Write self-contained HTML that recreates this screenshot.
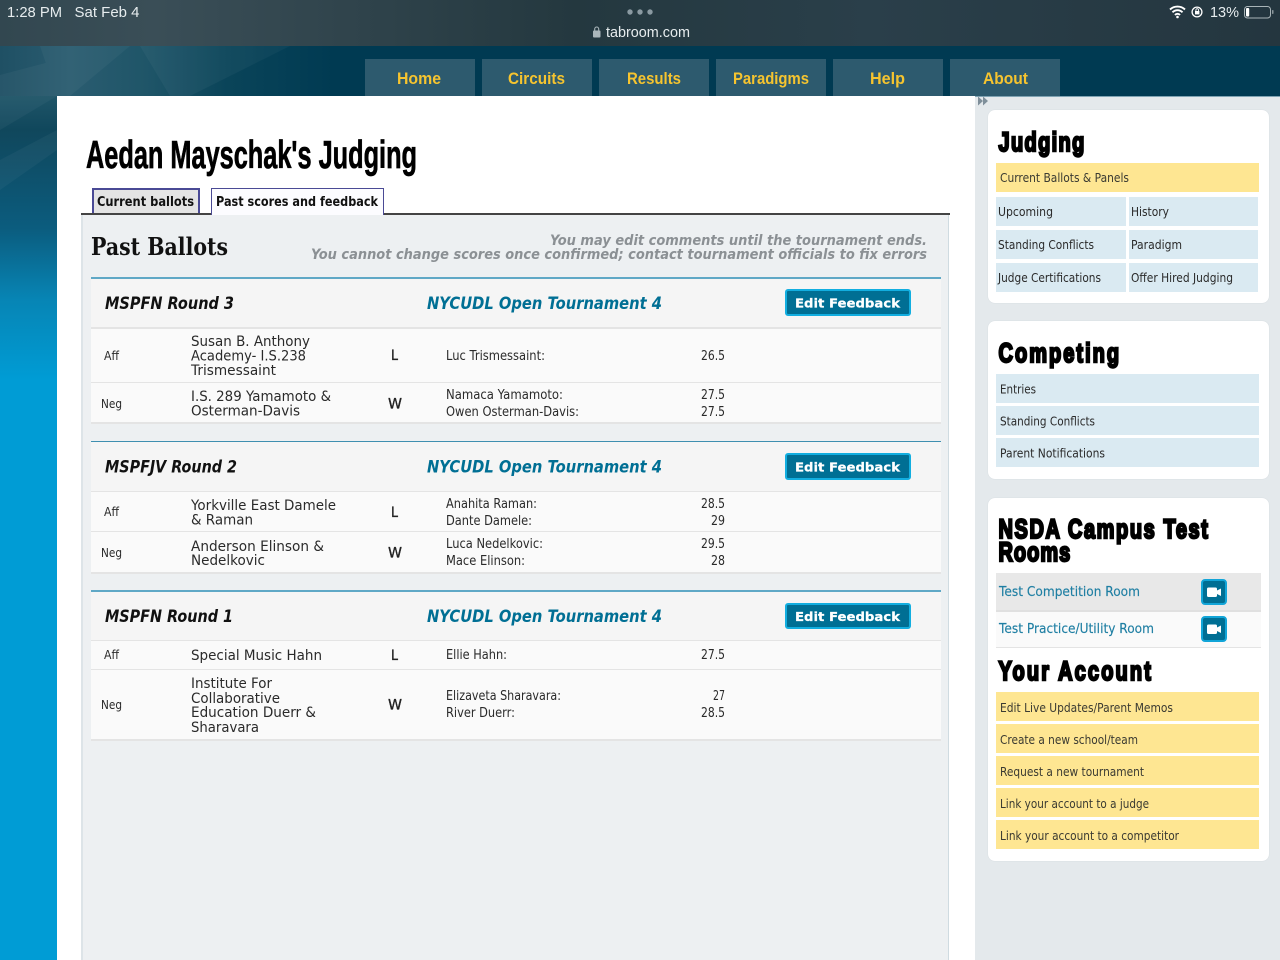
<!DOCTYPE html>
<html lang="en"><head><meta charset="utf-8"><title>Aedan Mayschak's Judging</title>
<style>
html,body{margin:0;padding:0;width:1280px;height:960px;overflow:hidden;background:#e4e9ec}
.b{position:absolute}
svg{position:absolute;left:0;top:0}
text{white-space:pre}
.s{font-family:"DejaVu Sans",sans-serif;font-size:12px;fill:#2a2a2a}
.m{font-family:"DejaVu Sans",sans-serif;font-size:13px;fill:#2a2a2a}
.l{font-family:"DejaVu Sans",sans-serif;font-size:14px;fill:#2a2a2a}
.y{font-family:"DejaVu Sans",sans-serif;font-size:12px;fill:#3a3a32}
.st{font-family:"Liberation Sans",sans-serif;font-size:14.5px;fill:#e6ecee}
.n{font-family:"Liberation Sans",sans-serif;font-size:16.5px;font-weight:700;fill:#f6c42f}
.h{font-family:"Liberation Sans",sans-serif;font-weight:700;fill:#000;stroke:#000;stroke-width:2.4px;font-size:27px}
.i{font-family:"DejaVu Sans",sans-serif;font-size:14px;font-style:italic;font-weight:700;fill:#8b9094}
.c{font-family:"DejaVu Sans",sans-serif;font-size:16.5px;font-style:italic;font-weight:700;fill:#111}
.t{font-family:"DejaVu Sans",sans-serif;font-size:16.5px;font-style:italic;font-weight:700;fill:#006f94}
.e{font-family:"DejaVu Sans",sans-serif;font-size:12.5px;font-weight:700;fill:#fff;stroke:#fff;stroke-width:.25px}
.r{font-family:"DejaVu Sans",sans-serif;font-size:14px;fill:#222;stroke:#222;stroke-width:.35px}
.a{font-family:"DejaVu Sans",sans-serif;font-size:13px;fill:#1f7fa3;stroke:#1f7fa3;stroke-width:.15px}
</style></head><body>
<div class="b" style="left:0;top:0;width:1280px;height:46px;background:linear-gradient(90deg,#324750 0%,#3a4e57 12%,#24383f 45%,#2a3f4a 68%,#24363f 100%)"></div>
<div class="b" style="left:0;top:96px;width:57px;height:864px;background:linear-gradient(180deg,#1f5568 0,#10475c 34px,#0b5c7e 132px,#0785b5 204px,#009cd5 284px,#009cd5 100%)"></div>
<div class="b" style="left:0;top:46px;width:1280px;height:50px;background:linear-gradient(90deg,#1f5064 0,#2a5c70 70px,#1f5568 147px,#0a4459 227px,#003a52 337px,#003a52 100%)"></div>
<div class="b" style="left:365px;top:59px;width:110px;height:37px;background:#2d5a6e"></div>
<div class="b" style="left:482px;top:59px;width:110px;height:37px;background:#2d5a6e"></div>
<div class="b" style="left:599px;top:59px;width:110px;height:37px;background:#2d5a6e"></div>
<div class="b" style="left:716px;top:59px;width:110px;height:37px;background:#2d5a6e"></div>
<div class="b" style="left:833px;top:59px;width:110px;height:37px;background:#2d5a6e"></div>
<div class="b" style="left:950px;top:59px;width:110px;height:37px;background:#2d5a6e"></div>
<div class="b" style="left:57px;top:96px;width:918px;height:864px;background:#fff"></div>
<div class="b" style="left:975px;top:96px;width:305px;height:864px;background:#e4e9ec"></div>
<div class="b" style="left:0;top:96px;width:1280px;height:1px;background:#7fa3b3;clip-path:inset(0 0 0 975px)"></div>

<div class="b" style="left:81px;top:214px;width:868px;height:746px;background:#edf0f2;border-left:2px solid #dde4e8;border-right:1px solid #cfdbe1;box-sizing:border-box"></div>
<div class="b" style="left:92px;top:188px;width:108px;height:26px;background:#e4e4e4;border:2px solid #4a4a95;border-bottom:0;box-sizing:border-box"></div>
<div class="b" style="left:81px;top:213px;width:869px;height:2px;background:#444"></div>
<div class="b" style="left:211px;top:188px;width:173px;height:27px;background:#fcfcff;border:1px solid #4a4a95;border-bottom:0;box-sizing:border-box"></div>

<div class="b" style="left:91px;top:277px;width:850px;height:2px;background:#5fa8c6"></div>
<div class="b" style="left:91px;top:279px;width:850px;height:48px;background:#f5f5f5"></div>
<div class="b" style="left:91px;top:327px;width:850px;height:2px;background:#e4e4e4"></div>
<div class="b" style="left:91px;top:329px;width:850px;height:53px;background:#fafafa"></div>
<div class="b" style="left:91px;top:382px;width:850px;height:1px;background:#e4e4e4"></div>
<div class="b" style="left:91px;top:383px;width:850px;height:39px;background:#fafafa"></div>
<div class="b" style="left:91px;top:422px;width:850px;height:2px;background:#e4e4e4"></div>

<div class="b" style="left:91px;top:441px;width:850px;height:1px;background:#3f8fb0"></div>
<div class="b" style="left:91px;top:442px;width:850px;height:49px;background:#f5f5f5"></div>
<div class="b" style="left:91px;top:491px;width:850px;height:1px;background:#e4e4e4"></div>
<div class="b" style="left:91px;top:492px;width:850px;height:39px;background:#fafafa"></div>
<div class="b" style="left:91px;top:531px;width:850px;height:1px;background:#e4e4e4"></div>
<div class="b" style="left:91px;top:532px;width:850px;height:40px;background:#fafafa"></div>
<div class="b" style="left:91px;top:572px;width:850px;height:2px;background:#e4e4e4"></div>

<div class="b" style="left:91px;top:590px;width:850px;height:2px;background:#5fa8c6"></div>
<div class="b" style="left:91px;top:592px;width:850px;height:48px;background:#f5f5f5"></div>
<div class="b" style="left:91px;top:640px;width:850px;height:1px;background:#e4e4e4"></div>
<div class="b" style="left:91px;top:641px;width:850px;height:28px;background:#fafafa"></div>
<div class="b" style="left:91px;top:669px;width:850px;height:1px;background:#e4e4e4"></div>
<div class="b" style="left:91px;top:670px;width:850px;height:69px;background:#fafafa"></div>
<div class="b" style="left:91px;top:739px;width:850px;height:2px;background:#e4e4e4"></div>

<div class="b" style="left:785px;top:289px;width:126px;height:27px;background:#006f94;border:2px solid #12aee0;border-radius:3px;box-sizing:border-box"></div>
<div class="b" style="left:785px;top:453px;width:126px;height:27px;background:#006f94;border:2px solid #12aee0;border-radius:3px;box-sizing:border-box"></div>
<div class="b" style="left:785px;top:603px;width:126px;height:26px;background:#006f94;border:2px solid #12aee0;border-radius:3px;box-sizing:border-box"></div>

<div class="b" style="left:988px;top:110px;width:281px;height:193px;background:#fff;border-radius:7px;box-shadow:0 0 1px #c5cdd2"></div>
<div class="b" style="left:988px;top:321px;width:281px;height:158px;background:#fff;border-radius:7px;box-shadow:0 0 1px #c5cdd2"></div>
<div class="b" style="left:988px;top:498px;width:281px;height:363px;background:#fff;border-radius:7px;box-shadow:0 0 1px #c5cdd2"></div>

<div class="b" style="left:996px;top:163px;width:263px;height:29px;background:#fee692"></div>
<div class="b" style="left:996px;top:197px;width:130px;height:29px;background:#daeaf2"></div>
<div class="b" style="left:1129px;top:197px;width:129px;height:29px;background:#daeaf2"></div>
<div class="b" style="left:996px;top:230px;width:130px;height:29px;background:#daeaf2"></div>
<div class="b" style="left:1129px;top:230px;width:129px;height:29px;background:#daeaf2"></div>
<div class="b" style="left:996px;top:263px;width:130px;height:29px;background:#daeaf2"></div>
<div class="b" style="left:1129px;top:263px;width:129px;height:29px;background:#daeaf2"></div>

<div class="b" style="left:996px;top:374px;width:263px;height:29px;background:#daeaf2"></div>
<div class="b" style="left:996px;top:406px;width:263px;height:29px;background:#daeaf2"></div>
<div class="b" style="left:996px;top:438px;width:263px;height:29px;background:#daeaf2"></div>

<div class="b" style="left:996px;top:573px;width:265px;height:37px;background:#e8e8e8;border-bottom:2px solid #e0e0e0"></div>
<div class="b" style="left:996px;top:612px;width:265px;height:35px;background:#fafafa;border-bottom:1px solid #e4e4e4"></div>
<div class="b" style="left:1201px;top:579px;width:26px;height:26px;background:#006f94;border:2px solid #12a5d8;border-radius:4px;box-sizing:border-box"></div>
<div class="b" style="left:1201px;top:616px;width:26px;height:26px;background:#006f94;border:2px solid #12a5d8;border-radius:4px;box-sizing:border-box"></div>

<div class="b" style="left:996px;top:692px;width:263px;height:29px;background:#fee692"></div>
<div class="b" style="left:996px;top:724px;width:263px;height:29px;background:#fee692"></div>
<div class="b" style="left:996px;top:756px;width:263px;height:29px;background:#fee692"></div>
<div class="b" style="left:996px;top:788px;width:263px;height:29px;background:#fee692"></div>
<div class="b" style="left:996px;top:820px;width:263px;height:29px;background:#fee692"></div>

<svg width="1280" height="960" viewBox="0 0 1280 960" xmlns="http://www.w3.org/2000/svg">
<g fill="#fff" opacity=".035"><polygon points="40,46 130,46 70,96 57,96"/><polygon points="0,75 57,60 57,96 0,130"/><polygon points="0,160 57,130 57,150 0,190"/><polygon points="140,46 290,46 190,96 170,96"/></g>

<text class="st" x="7" y="17" textLength="55" lengthAdjust="spacingAndGlyphs">1:28 PM</text>
<text class="st" x="74.5" y="17" textLength="65" lengthAdjust="spacingAndGlyphs">Sat Feb 4</text>
<circle cx="630" cy="12" r="2.7" fill="#8a9aa2"/><circle cx="640" cy="12" r="2.7" fill="#8a9aa2"/><circle cx="650" cy="12" r="2.7" fill="#8a9aa2"/>
<rect x="593" y="30.5" width="7.5" height="7" rx="1" fill="#aab6bb"/><path d="M594.7 31V29a2 2 0 0 1 4 0v2" fill="none" stroke="#aab6bb" stroke-width="1.1"/>
<text class="st" x="606" y="37" textLength="84" lengthAdjust="spacingAndGlyphs">tabroom.com</text>
<path d="M1170 9.500a11 11 0 0 1 15 0M1172.500 12.300a7 7 0 0 1 10 0M1175 15a3.300 3.300 0 0 1 5 0" fill="none" stroke="#fff" stroke-width="1.9"/><circle cx="1177.500" cy="17" r="1.300" fill="#fff"/>
<circle cx="1197" cy="12" r="4.900" fill="none" stroke="#fff" stroke-width="1.300"/><rect x="1195" y="11" width="4.400" height="3.400" fill="#fff"/><path d="M1195.900 11v-1a1.300 1.300 0 0 1 2.600 0v1" fill="none" stroke="#fff" stroke-width=".9"/>
<text class="st" x="1210" y="17" textLength="29" lengthAdjust="spacingAndGlyphs">13%</text>
<rect x="1244.500" y="6.500" width="26" height="11.500" rx="3" fill="none" stroke="#a9b4b8"/><rect x="1246" y="8" width="3.200" height="8.500" rx="1" fill="#fff"/><rect x="1272" y="10" width="1.500" height="4" rx=".7" fill="#8a969b"/>

<text class="n" x="397" y="84" textLength="44" lengthAdjust="spacingAndGlyphs">Home</text>
<text class="n" x="508" y="84" textLength="57" lengthAdjust="spacingAndGlyphs">Circuits</text>
<text class="n" x="627" y="84" textLength="54" lengthAdjust="spacingAndGlyphs">Results</text>
<text class="n" x="733" y="84" textLength="76" lengthAdjust="spacingAndGlyphs">Paradigms</text>
<text class="n" x="870" y="84" textLength="35" lengthAdjust="spacingAndGlyphs">Help</text>
<text class="n" x="983" y="84" textLength="45" lengthAdjust="spacingAndGlyphs">About</text>

<path d="M978 96.500l5 4.500-5 4.500zM983 96.500l5 4.500-5 4.500z" fill="#7f8f9a"/>

<text x="86" y="168" textLength="331" lengthAdjust="spacingAndGlyphs" style="font-family:'Liberation Sans',sans-serif;font-weight:700;font-size:39px;fill:#000;stroke:#000;stroke-width:.7px">Aedan Mayschak's Judging</text>
<text x="97" y="206" textLength="97" lengthAdjust="spacingAndGlyphs" style="font-family:'DejaVu Sans',sans-serif;font-weight:700;font-size:13px;fill:#111">Current ballots</text>
<text x="216" y="206" textLength="162" lengthAdjust="spacingAndGlyphs" style="font-family:'DejaVu Sans',sans-serif;font-weight:700;font-size:13px;fill:#111">Past scores and feedback</text>

<text x="91" y="255" textLength="137" lengthAdjust="spacingAndGlyphs" style="font-family:'DejaVu Serif',serif;font-weight:700;font-size:24px;fill:#111">Past Ballots</text>
<text class="i" x="550" y="245" textLength="377" lengthAdjust="spacingAndGlyphs">You may edit comments until the tournament ends.</text>
<text class="i" x="311" y="259" textLength="616" lengthAdjust="spacingAndGlyphs">You cannot change scores once confirmed; contact tournament officials to fix errors</text>

<text class="c" x="105" y="309" textLength="129" lengthAdjust="spacingAndGlyphs">MSPFN Round 3</text>
<text class="t" x="427" y="309" textLength="235" lengthAdjust="spacingAndGlyphs">NYCUDL Open Tournament 4</text>
<text class="e" x="795" y="307.500" textLength="105" lengthAdjust="spacingAndGlyphs">Edit Feedback</text>
<text class="s" x="104" y="360" textLength="15" lengthAdjust="spacingAndGlyphs">Aff</text>
<text class="l" x="191" y="346" textLength="119" lengthAdjust="spacingAndGlyphs">Susan B. Anthony</text>
<text class="l" x="191" y="360.500" textLength="115" lengthAdjust="spacingAndGlyphs">Academy- I.S.238</text>
<text class="l" x="191" y="375" textLength="85" lengthAdjust="spacingAndGlyphs">Trismessaint</text>
<text class="r" x="391" y="360" textLength="7" lengthAdjust="spacingAndGlyphs">L</text>
<text class="m" x="446" y="360" textLength="99" lengthAdjust="spacingAndGlyphs">Luc Trismessaint:</text>
<text class="m" x="701" y="360" textLength="24" lengthAdjust="spacingAndGlyphs">26.5</text>
<text class="s" x="101" y="408" textLength="21" lengthAdjust="spacingAndGlyphs">Neg</text>
<text class="l" x="191" y="401" textLength="140" lengthAdjust="spacingAndGlyphs">I.S. 289 Yamamoto &amp;</text>
<text class="l" x="191" y="415.500" textLength="109" lengthAdjust="spacingAndGlyphs">Osterman-Davis</text>
<text class="r" x="388" y="408.500" textLength="14" lengthAdjust="spacingAndGlyphs">W</text>
<text class="m" x="446" y="399" textLength="117" lengthAdjust="spacingAndGlyphs">Namaca Yamamoto:</text>
<text class="m" x="446" y="416" textLength="133" lengthAdjust="spacingAndGlyphs">Owen Osterman-Davis:</text>
<text class="m" x="701" y="399" textLength="24" lengthAdjust="spacingAndGlyphs">27.5</text>
<text class="m" x="701" y="416" textLength="24" lengthAdjust="spacingAndGlyphs">27.5</text>

<text class="c" x="105" y="472.500" textLength="132" lengthAdjust="spacingAndGlyphs">MSPFJV Round 2</text>
<text class="t" x="427" y="472.500" textLength="235" lengthAdjust="spacingAndGlyphs">NYCUDL Open Tournament 4</text>
<text class="e" x="795" y="471.500" textLength="105" lengthAdjust="spacingAndGlyphs">Edit Feedback</text>
<text class="s" x="104" y="516" textLength="15" lengthAdjust="spacingAndGlyphs">Aff</text>
<text class="l" x="191" y="510" textLength="145" lengthAdjust="spacingAndGlyphs">Yorkville East Damele</text>
<text class="l" x="191" y="524.500" textLength="62" lengthAdjust="spacingAndGlyphs">&amp; Raman</text>
<text class="r" x="391" y="517" textLength="7" lengthAdjust="spacingAndGlyphs">L</text>
<text class="m" x="446" y="508" textLength="91" lengthAdjust="spacingAndGlyphs">Anahita Raman:</text>
<text class="m" x="446" y="525" textLength="86" lengthAdjust="spacingAndGlyphs">Dante Damele:</text>
<text class="m" x="701" y="508" textLength="24" lengthAdjust="spacingAndGlyphs">28.5</text>
<text class="m" x="711" y="525" textLength="14" lengthAdjust="spacingAndGlyphs">29</text>
<text class="s" x="101" y="557" textLength="21" lengthAdjust="spacingAndGlyphs">Neg</text>
<text class="l" x="191" y="551" textLength="133" lengthAdjust="spacingAndGlyphs">Anderson Elinson &amp;</text>
<text class="l" x="191" y="565" textLength="74" lengthAdjust="spacingAndGlyphs">Nedelkovic</text>
<text class="r" x="388" y="557.500" textLength="14" lengthAdjust="spacingAndGlyphs">W</text>
<text class="m" x="446" y="548" textLength="97" lengthAdjust="spacingAndGlyphs">Luca Nedelkovic:</text>
<text class="m" x="446" y="565" textLength="79" lengthAdjust="spacingAndGlyphs">Mace Elinson:</text>
<text class="m" x="701" y="548" textLength="24" lengthAdjust="spacingAndGlyphs">29.5</text>
<text class="m" x="711" y="565" textLength="14" lengthAdjust="spacingAndGlyphs">28</text>

<text class="c" x="105" y="622" textLength="128" lengthAdjust="spacingAndGlyphs">MSPFN Round 1</text>
<text class="t" x="427" y="622" textLength="235" lengthAdjust="spacingAndGlyphs">NYCUDL Open Tournament 4</text>
<text class="e" x="795" y="621" textLength="105" lengthAdjust="spacingAndGlyphs">Edit Feedback</text>
<text class="s" x="104" y="659" textLength="15" lengthAdjust="spacingAndGlyphs">Aff</text>
<text class="l" x="191" y="660" textLength="131" lengthAdjust="spacingAndGlyphs">Special Music Hahn</text>
<text class="r" x="391" y="660" textLength="7" lengthAdjust="spacingAndGlyphs">L</text>
<text class="m" x="446" y="659" textLength="61" lengthAdjust="spacingAndGlyphs">Ellie Hahn:</text>
<text class="m" x="701" y="659" textLength="24" lengthAdjust="spacingAndGlyphs">27.5</text>
<text class="s" x="101" y="709" textLength="21" lengthAdjust="spacingAndGlyphs">Neg</text>
<text class="l" x="191" y="688" textLength="81" lengthAdjust="spacingAndGlyphs">Institute For</text>
<text class="l" x="191" y="703" textLength="89" lengthAdjust="spacingAndGlyphs">Collaborative</text>
<text class="l" x="191" y="717" textLength="125" lengthAdjust="spacingAndGlyphs">Education Duerr &amp;</text>
<text class="l" x="191" y="732" textLength="68" lengthAdjust="spacingAndGlyphs">Sharavara</text>
<text class="r" x="388" y="709.500" textLength="14" lengthAdjust="spacingAndGlyphs">W</text>
<text class="m" x="446" y="700" textLength="115" lengthAdjust="spacingAndGlyphs">Elizaveta Sharavara:</text>
<text class="m" x="446" y="717" textLength="69" lengthAdjust="spacingAndGlyphs">River Duerr:</text>
<text class="m" x="713" y="700" textLength="12" lengthAdjust="spacingAndGlyphs">27</text>
<text class="m" x="701" y="717" textLength="24" lengthAdjust="spacingAndGlyphs">28.5</text>

<text class="h" transform="translate(998.500 151) scale(.74 1)" textLength="116" lengthAdjust="spacing">Judging</text>
<text class="y" x="1000" y="182" textLength="129" lengthAdjust="spacingAndGlyphs">Current Ballots &amp; Panels</text>
<text class="s" x="998" y="216" textLength="55" lengthAdjust="spacingAndGlyphs">Upcoming</text>
<text class="s" x="1131" y="216" textLength="38" lengthAdjust="spacingAndGlyphs">History</text>
<text class="s" x="998" y="249" textLength="96" lengthAdjust="spacingAndGlyphs">Standing Conflicts</text>
<text class="s" x="1131" y="249" textLength="51" lengthAdjust="spacingAndGlyphs">Paradigm</text>
<text class="s" x="998" y="282" textLength="103" lengthAdjust="spacingAndGlyphs">Judge Certifications</text>
<text class="s" x="1131" y="282" textLength="102" lengthAdjust="spacingAndGlyphs">Offer Hired Judging</text>

<text class="h" transform="translate(998.500 362) scale(.74 1)" textLength="163" lengthAdjust="spacing">Competing</text>
<text class="s" x="1000" y="393.500" textLength="36" lengthAdjust="spacingAndGlyphs">Entries</text>
<text class="s" x="1000" y="425.500" textLength="95" lengthAdjust="spacingAndGlyphs">Standing Conflicts</text>
<text class="s" x="1000" y="457.500" textLength="105" lengthAdjust="spacingAndGlyphs">Parent Notifications</text>

<text class="h" transform="translate(998.500 538) scale(.74 1)" textLength="283" lengthAdjust="spacing">NSDA Campus Test</text>
<text class="h" transform="translate(998.500 561) scale(.74 1)" textLength="97" lengthAdjust="spacing">Rooms</text>
<text class="a" x="999" y="596" textLength="141" lengthAdjust="spacingAndGlyphs">Test Competition Room</text>
<text class="a" x="999" y="633" textLength="155" lengthAdjust="spacingAndGlyphs">Test Practice/Utility Room</text>
<rect x="1207" y="587.500" width="10" height="9.500" rx="1.500" fill="#fff"/><path d="M1217 590.500l4-2v7.500l-4-2z" fill="#fff"/>
<rect x="1207" y="624.500" width="10" height="9.500" rx="1.500" fill="#fff"/><path d="M1217 627.500l4-2v7.500l-4-2z" fill="#fff"/>

<text class="h" transform="translate(998.500 680) scale(.74 1)" textLength="206" lengthAdjust="spacing">Your Account</text>
<text class="y" x="1000" y="712" textLength="173" lengthAdjust="spacingAndGlyphs">Edit Live Updates/Parent Memos</text>
<text class="y" x="1000" y="744" textLength="138" lengthAdjust="spacingAndGlyphs">Create a new school/team</text>
<text class="y" x="1000" y="776" textLength="144" lengthAdjust="spacingAndGlyphs">Request a new tournament</text>
<text class="y" x="1000" y="808" textLength="149" lengthAdjust="spacingAndGlyphs">Link your account to a judge</text>
<text class="y" x="1000" y="840" textLength="179" lengthAdjust="spacingAndGlyphs">Link your account to a competitor</text>
</svg>
</body></html>
